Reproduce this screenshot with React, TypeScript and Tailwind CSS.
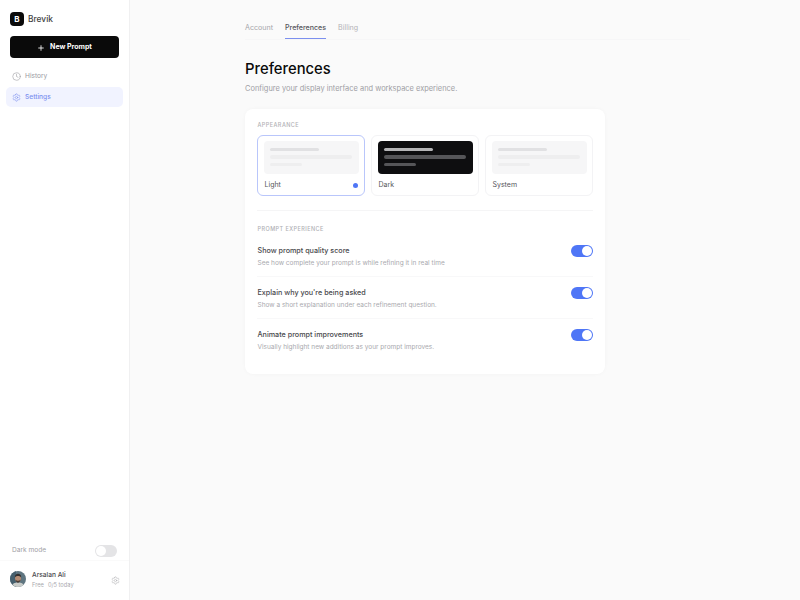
import { Clock, Plus, Settings } from "lucide-react";

const font = { fontFamily: "Inter, sans-serif" };

function Toggle({ on }: { on: boolean }) {
  return on ? (
    <div className="flex h-[12px] w-[22px] shrink-0 items-center justify-end rounded-full bg-[#4f76f6] pr-[1px]">
      <div className="h-[10px] w-[10px] rounded-full bg-white" />
    </div>
  ) : (
    <div className="flex h-[12px] w-[22px] shrink-0 items-center rounded-full bg-[#e4e4e6] pl-[1px]">
      <div className="h-[10px] w-[10px] rounded-full bg-white" />
    </div>
  );
}

function ThemeCard({ label, variant, selected }: { label: string; variant: "light" | "dark"; selected?: boolean }) {
  const dark = variant === "dark";
  return (
    <div className={`flex h-[61.5px] w-[108px] flex-col rounded-[6px] border bg-white px-[5.5px] pt-[5.5px] ${selected ? "border-[#b9c6fb]" : "border-[#f3f3f5]"}`}>
      <div className={`flex h-[33px] flex-col gap-[4px] rounded-[4px] px-[6.5px] pt-[6.5px] ${dark ? "bg-[#0e0e10]" : "bg-[#f6f6f7]"}`}>
        <div className={`h-[3.5px] w-[49px] rounded-full ${dark ? "bg-[#b5b5b7]" : "bg-[#e1e1e3]"}`} />
        <div className={`h-[3.5px] w-[82px] rounded-full ${dark ? "bg-[#555558]" : "bg-[#eeeeef]"}`} />
        <div className={`h-[3.5px] w-[32px] rounded-full ${dark ? "bg-[#555558]" : "bg-[#eeeeef]"}`} />
      </div>
      <div className="mt-[6px] flex items-center justify-between pl-[1px] pr-[1px]">
        <span className="text-[7px] leading-[10px] text-[#55555a]">{label}</span>
        {selected && <div className="h-[5px] w-[5px] rounded-full bg-[#4f76f6]" />}
      </div>
    </div>
  );
}

function PrefRow({ title, desc, last }: { title: string; desc: string; last?: boolean }) {
  return (
    <div className={`flex h-[42px] items-start justify-between pt-[10.5px] ${last ? "" : "border-b border-[#f8f8f9]"}`}>
      <div className="pl-[0.5px]">
        <div className="text-[7.2px] font-medium leading-[11px] text-[#48484c]">{title}</div>
        <div className="mt-[1.5px] text-[6.5px] leading-[10px] text-[#a9a9ae]">{desc}</div>
      </div>
      <Toggle on />
    </div>
  );
}

function Avatar() {
  return (
    <svg width="16" height="16" viewBox="0 0 16 16" className="-mt-[2px] shrink-0 rounded-full">
      <rect width="16" height="16" fill="#5f7580" />
      <rect x="0" y="0" width="6" height="16" fill="#46606e" />
      <path d="M1.5 16c.4-3.3 3-4.6 6.5-4.6s6 1.3 6.5 4.6z" fill="#c9ccc9" />
      <ellipse cx="8" cy="7.3" rx="3" ry="3.8" fill="#b48c74" />
      <path d="M4.8 6.5C4.7 3.8 6.2 2.7 8 2.7s3.4 1.1 3.2 3.8C10.4 5 9 4.9 8 4.9S5.6 5 4.8 6.5z" fill="#33302e" />
      <path d="M5.3 8.5c.6 2.6 1.6 3.2 2.7 3.2s2.1-.6 2.7-3.2c-.8 1-1.7 1.2-2.7 1.2s-1.9-.2-2.7-1.2z" fill="#4a3d36" />
    </svg>
  );
}

export default function App() {
  return (
    <div className="flex h-[600px] w-[800px] overflow-hidden bg-[#fafafa] antialiased" style={font}>
      <aside className="flex w-[130px] shrink-0 flex-col border-r border-[#f0f0f1] bg-white">
        <div className="flex h-[36px] items-center gap-[4px] pl-[10px] pt-[2px]">
          <div className="flex h-[14px] w-[14px] items-center justify-center rounded-[4px] bg-[#0a0a0a] text-[8px] font-bold text-white">B</div>
          <span className="text-[8.4px] font-medium text-[#3f3f42]">Brevik</span>
        </div>
        <div className="px-[10px]">
          <div className="flex h-[22px] w-[109px] items-center justify-center gap-[5px] rounded-[4px] bg-[#0a0a0a] pt-[1px] text-[7px] font-bold text-white">
            <Plus size={8} strokeWidth={2.5} />
            New Prompt
          </div>
        </div>
        <nav className="mt-[8px] flex flex-col gap-[1px] px-[6px]">
          <div className="flex h-[20px] items-center gap-[4px] pl-[6px] pt-[1.5px] text-[6.6px] text-[#9a9a9f]">
            <Clock size={9} strokeWidth={1.5} />
            History
          </div>
          <div className="flex h-[19.5px] items-center gap-[4px] rounded-[5px] bg-[#f1f3ff] pl-[6px] pt-[1.5px] text-[6.6px] font-medium text-[#7c90ef]">
            <Settings size={9} strokeWidth={1.5} />
            Settings
          </div>
        </nav>
        <div className="mt-auto flex h-[20px] items-center justify-between pl-[12px] pr-[12px] pt-[2px]">
          <span className="text-[6.6px] text-[#a0a0a5]">Dark mode</span>
          <Toggle on={false} />
        </div>
        <div className="mb-[2px] flex h-[38px] items-center gap-[6px] border-t border-[#fafafa] pl-[10px] pr-[9px] pt-[1px]">
          <Avatar />
          <div className="flex-1">
            <div className="text-[6.6px] font-medium leading-[9px] text-[#48484c]">Arsalan Ali</div>
            <div className="mt-[1px] flex gap-[4px] text-[5.7px] leading-[8px] text-[#a9a9ae]">
              <span>Free</span>
              <span>0/5 today</span>
            </div>
          </div>
          <Settings size={9} strokeWidth={1.5} className="text-[#b0b0b4]" />
        </div>
      </aside>
      <main className="flex-1 pl-[115px]">
        <div className="flex h-[40px] w-[445px] items-start gap-[12px] border-b border-[#f6f6f7] pt-[21px]">
          <span className="pt-[1px] text-[7.1px] leading-[12px] text-[#a6a6ab]">Account</span>
          <span className="h-[18px] border-b border-[#7c90ef] pt-[1px] text-[7.1px] font-medium leading-[12px] text-[#55555a]">Preferences</span>
          <span className="pt-[1px] text-[7.1px] leading-[12px] text-[#b2b2b6]">Billing</span>
        </div>
        <h1 className="mt-[19px] text-[14.8px] font-medium leading-[20px] text-[#0a0a0a]">Preferences</h1>
        <p className="mt-[4px] text-[7.45px] leading-[12px] text-[#a0a0a5]">Configure your display interface and workspace experience.</p>
        <section className="mt-[14px] h-[265px] w-[360px] rounded-[8px] bg-white px-[12px] pt-[12px] shadow-[0_0_4px_rgba(0,0,0,0.03)]">
          <h2 className="pl-[0.5px] text-[5.5px] font-medium uppercase leading-[8px] tracking-[0.08em] text-[#b0b0b4]">Appearance</h2>
          <div className="mt-[5.5px] flex gap-[6px]">
            <ThemeCard label="Light" variant="light" selected />
            <ThemeCard label="Dark" variant="dark" />
            <ThemeCard label="System" variant="light" />
          </div>
          <div className="mt-[14px] border-t border-[#f5f5f6]" />
          <h2 className="mt-[14px] pl-[0.5px] text-[5.5px] font-medium uppercase leading-[8px] tracking-[0.08em] text-[#b0b0b4]">Prompt experience</h2>
          <div className="mt-[1.5px] flex flex-col">
            <PrefRow title="Show prompt quality score" desc="See how complete your prompt is while refining it in real time" />
            <PrefRow title="Explain why you're being asked" desc="Show a short explanation under each refinement question." />
            <PrefRow title="Animate prompt improvements" desc="Visually highlight new additions as your prompt improves." last />
          </div>
        </section>
      </main>
    </div>
  );
}
